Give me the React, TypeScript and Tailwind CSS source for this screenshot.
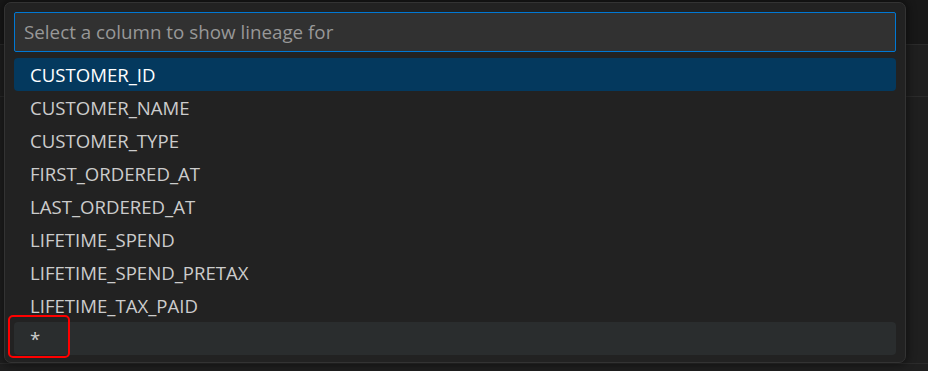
import React from 'react';

const columns = [
  'CUSTOMER_ID',
  'CUSTOMER_NAME',
  'CUSTOMER_TYPE',
  'FIRST_ORDERED_AT',
  'LAST_ORDERED_AT',
  'LIFETIME_SPEND',
  'LIFETIME_SPEND_PRETAX',
  'LIFETIME_TAX_PAID',
  '*',
];

export default function App() {
  return (
    <div
      className="relative h-[371px] w-[928px] overflow-hidden bg-[#1f1f1f]"
      style={{ fontFamily: '"Open Sans", "Noto Sans", sans-serif' }}
    >
      {/* editor behind the quick pick */}
      <div className="flex h-full flex-col">
        <div className="h-[45px] border-b border-[#2b2b2b] bg-[#181818]" />
        <div className="h-[52px] border-b border-[#2b2b2b] bg-[#1f1f1f]" />
        <div className="flex-1" />
        <div className="h-[8px] border-t border-[#2b2b2b] bg-[#1f1f1f]" />
      </div>

      {/* quick pick */}
      <div className="absolute left-[4px] top-[2px] flex w-[902px] flex-col rounded-[7px] border border-[#333] bg-[#222222] px-[9px] pb-[7px] pt-[9px] shadow-[0_0_8px_2px_rgba(0,0,0,0.45)]">
        <div className="flex h-[40px] items-center rounded-[2px] border border-[#0078d4] bg-[#313131] px-[9px]">
          <span className="text-[18.8px] text-[#989898]">Select a column to show lineage for</span>
        </div>
        <div className="mt-[6px] flex flex-col">
          {columns.map((c, i) => (
            <div
              key={c}
              className={`flex h-[33px] items-center rounded-[4px] px-[16px] text-[18.6px] ${
                i === 0
                  ? 'bg-[#04395e] text-white'
                  : i === columns.length - 1
                  ? 'bg-[#2a2d2e] text-[#cccccc]'
                  : 'text-[#cccccc]'
              }`}
            >
              {c}
            </div>
          ))}
        </div>
      </div>

      {/* annotation */}
      <div className="absolute left-[8px] top-[315px] h-[43px] w-[62px] rounded-[5px] border-2 border-[#ff0000]" />
    </div>
  );
}
